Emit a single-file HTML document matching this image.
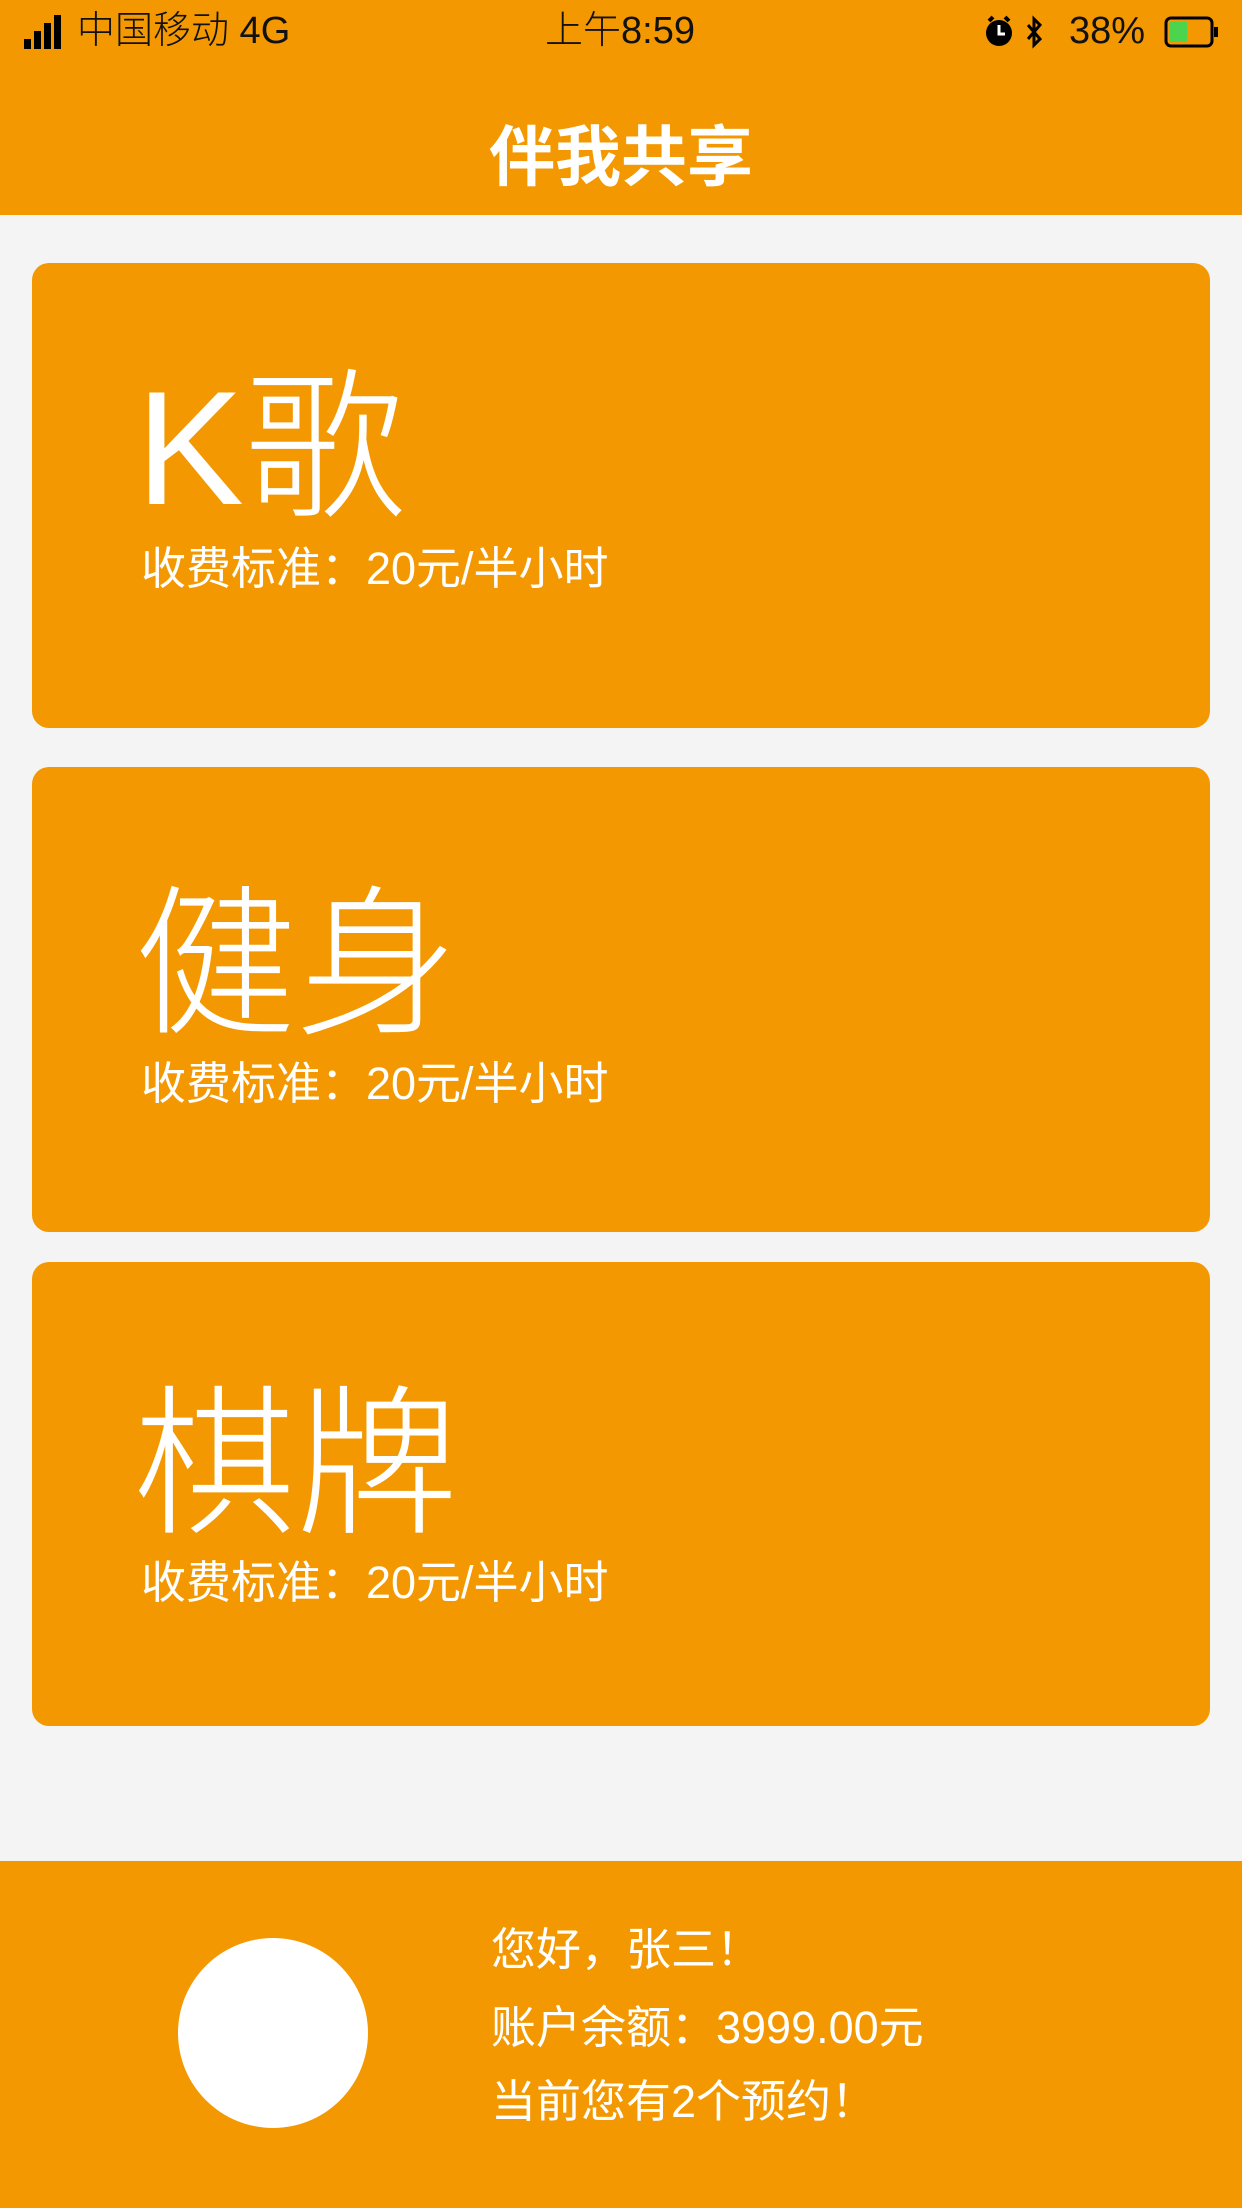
<!DOCTYPE html>
<html><head><meta charset="utf-8"><style>
*{margin:0;padding:0;box-sizing:border-box}
body{width:1242px;height:2208px;background:#f4f4f4;position:relative;overflow:hidden;font-family:"Liberation Sans","Noto Sans CJK SC",sans-serif}
.o{background:#f39800;position:absolute}
.t{position:absolute;white-space:nowrap;line-height:1}
.w{color:#fff}
.big{font-size:162px;font-weight:300}
</style></head><body>
<div class="o" style="left:0;top:0;width:1242px;height:215px"></div>
<svg style="position:absolute;left:24px;top:15px" width="40" height="34"><rect x="0" y="24" width="7" height="10" fill="#000"/><rect x="10" y="16" width="7" height="18" fill="#000"/><rect x="20" y="8" width="7" height="26" fill="#000"/><rect x="30" y="0" width="7" height="34" fill="#000"/></svg>
<div class="t" style="left:77px;top:12px;font-size:38px;color:#111;font-weight:300">中国移动 4G</div>
<div class="t" style="left:545px;top:12px;font-size:38px;color:#111;font-weight:300">上午8:59</div>
<svg style="position:absolute;left:983px;top:15px" width="80" height="36"><circle cx="16" cy="18" r="13" fill="#000"/><path d="M6 6 L10 2 M26 6 L22 2" stroke="#000" stroke-width="4"/><path d="M16 10 V19 H22" stroke="#fff" stroke-width="3" fill="none"/><path d="M45 10 L57 24 L51 30 V4 L57 10 L45 24" stroke="#000" stroke-width="3" fill="none"/></svg>
<div class="t" style="left:1069px;top:12px;font-size:38px;color:#111;font-weight:300">38%</div>
<svg style="position:absolute;left:1164px;top:15px" width="56" height="34"><rect x="2" y="3" width="46" height="28" rx="5" fill="none" stroke="#000" stroke-width="3"/><rect x="6" y="7" width="17" height="20" fill="#4cd44f"/><rect x="50" y="12" width="4" height="10" fill="#000"/></svg>
<div class="t w" style="left:0;width:1242px;text-align:center;top:124px;font-size:66px;font-weight:bold">伴我共享</div>

<div class="o" style="left:32px;top:263px;width:1178px;height:465px;border-radius:17px"></div>
<div class="o" style="left:32px;top:767px;width:1178px;height:465px;border-radius:17px"></div>
<div class="o" style="left:32px;top:1262px;width:1178px;height:464px;border-radius:17px"></div>

<div class="t w big" style="left:136px;top:368px">K歌</div>
<div class="t w" style="left:141px;top:546px;font-size:45px">收费标准：20元/半小时</div>
<div class="t w big" style="left:134px;top:885px">健身</div>
<div class="t w" style="left:141px;top:1061px;font-size:45px">收费标准：20元/半小时</div>
<div class="t w big" style="left:134px;top:1385px">棋牌</div>
<div class="t w" style="left:141px;top:1560px;font-size:45px">收费标准：20元/半小时</div>

<div class="o" style="left:0;top:1861px;width:1242px;height:347px"></div>
<div style="position:absolute;left:178px;top:1938px;width:190px;height:190px;border-radius:50%;background:#fff"></div>
<div class="t w" style="left:491px;top:1927px;font-size:45px">您好，张三！</div>
<div class="t w" style="left:491px;top:2005px;font-size:45px">账户余额：3999.00元</div>
<div class="t w" style="left:491px;top:2079px;font-size:45px">当前您有2个预约！</div>
</body></html>
